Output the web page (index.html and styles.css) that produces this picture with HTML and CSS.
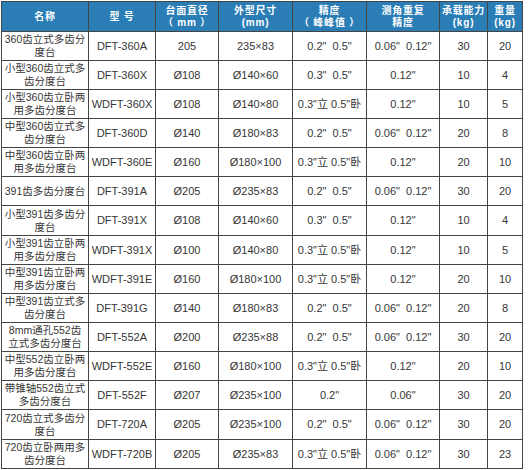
FILE: index.html
```html
<!DOCTYPE html>
<html lang="zh">
<head>
<meta charset="utf-8">
<title>多齿分度台</title>
<link rel="stylesheet" href="styles.css">
</head>
<body>
<table class="spec">
  <colgroup>
    <col class="c1"><col class="c2"><col class="c3"><col class="c4"><col class="c5"><col class="c6"><col class="c7"><col class="c8">
  </colgroup>
  <thead>
    <tr>
      <th>名称</th>
      <th>型 号</th>
      <th>台面直径<br>（ mm ）</th>
      <th>外型尺寸<br>(mm)</th>
      <th>精度<br>（ 峰峰值 ）</th>
      <th>测角重复<br>精度</th>
      <th>承载能力<br>(kg)</th>
      <th>重量<br>(kg)</th>
    </tr>
  </thead>
  <tbody>
    <tr><td class="name">360齿立式多齿分<br>度台</td><td>DFT-360A</td><td>205</td><td>235×83</td><td>0.2"&nbsp; 0.5"</td><td>0.06"&nbsp; 0.12"</td><td>30</td><td>20</td></tr>
    <tr><td class="name">小型360齿立式多<br>齿分度台</td><td>DFT-360X</td><td>Ø108</td><td>Ø140×60</td><td>0.3"&nbsp; 0.5"</td><td>0.12"</td><td>10</td><td>4</td></tr>
    <tr><td class="name">小型360齿立卧两<br>用多齿分度台</td><td>WDFT-360X</td><td>Ø108</td><td>Ø140×80</td><td>0.3"立 0.5"卧</td><td>0.12"</td><td>10</td><td>5</td></tr>
    <tr><td class="name">中型360齿立式多<br>齿分度台</td><td>DFT-360D</td><td>Ø140</td><td>Ø180×83</td><td>0.2"&nbsp; 0.5"</td><td>0.06"&nbsp; 0.12"</td><td>20</td><td>8</td></tr>
    <tr><td class="name">中型360齿立卧两<br>用多齿分度台</td><td>WDFT-360E</td><td>Ø160</td><td>Ø180×100</td><td>0.3"立 0.5"卧</td><td>0.12"</td><td>20</td><td>10</td></tr>
    <tr><td class="name">391齿多齿分度台</td><td>DFT-391A</td><td>Ø205</td><td>Ø235×83</td><td>0.2"&nbsp; 0.5"</td><td>0.06"&nbsp; 0.12"</td><td>30</td><td>20</td></tr>
    <tr><td class="name">小型391齿多齿分<br>度台</td><td>DFT-391X</td><td>Ø108</td><td>Ø140×60</td><td>0.3"&nbsp; 0.5"</td><td>0.12"</td><td>10</td><td>4</td></tr>
    <tr><td class="name">小型391齿立卧两<br>用多齿分度台</td><td>WDFT-391X</td><td>Ø100</td><td>Ø140×80</td><td>0.3"立 0.5"卧</td><td>0.12"</td><td>10</td><td>5</td></tr>
    <tr><td class="name">中型391齿立卧两<br>用多齿分度台</td><td>WDFT-391E</td><td>Ø160</td><td>Ø180×100</td><td>0.3"立 0.5"卧</td><td>0.12"</td><td>20</td><td>10</td></tr>
    <tr><td class="name">中型391齿立式多<br>齿分度台</td><td>DFT-391G</td><td>Ø140</td><td>Ø180×83</td><td>0.2"&nbsp; 0.5"</td><td>0.06"&nbsp; 0.12"</td><td>20</td><td>8</td></tr>
    <tr><td class="name">8mm通孔552齿<br>立式多齿分度台</td><td>DFT-552A</td><td>Ø200</td><td>Ø235×88</td><td>0.2"&nbsp; 0.5"</td><td>0.06"&nbsp; 0.12"</td><td>30</td><td>20</td></tr>
    <tr><td class="name">中型552齿立卧两<br>用多齿分度台</td><td>WDFT-552E</td><td>Ø160</td><td>Ø180×100</td><td>0.3"立 0.5"卧</td><td>0.12"</td><td>20</td><td>10</td></tr>
    <tr><td class="name">带锥轴552齿立式<br>多齿分度台</td><td>DFT-552F</td><td>Ø207</td><td>Ø235×100</td><td>0.2"</td><td>0.06"</td><td>30</td><td>20</td></tr>
    <tr><td class="name">720齿立式多齿分<br>度台</td><td>DFT-720A</td><td>Ø205</td><td>Ø235×100</td><td>0.2"&nbsp; 0.5"</td><td>0.06"&nbsp; 0.12"</td><td>30</td><td>20</td></tr>
    <tr><td class="name">720齿立卧两用多<br>齿分度台</td><td>WDFT-720B</td><td>Ø205</td><td>Ø235×83</td><td>0.3"立 0.5"卧</td><td>0.06"&nbsp; 0.12"</td><td>30</td><td>23</td></tr>
  </tbody>
</table>
</body>
</html>
```
FILE: styles.css
```css
html, body {
  margin: 0;
  padding: 0;
  background: #ffffff;
}
body {
  padding: 1px 0 0 1px;
  font-family: "Liberation Sans", Arial, "Noto Sans CJK SC", sans-serif;
  color: #363636;
}
.spec {
  border-collapse: collapse;
  table-layout: fixed;
  width: 521px;
}
.c1 { width: 87px; }
.c2 { width: 67px; }
.c3 { width: 63px; }
.c4 { width: 74px; }
.c5 { width: 74px; }
.c6 { width: 73px; }
.c7 { width: 48px; }
.c8 { width: 35px; }

.spec th,
.spec td {
  border: 1px solid #454545;
  text-align: center;
  vertical-align: middle;
  padding: 0;
  overflow: hidden;
  white-space: nowrap;
}
.spec thead tr { height: 30px; }
.spec tbody tr { height: 29px; }
.spec tbody tr:nth-child(7n) { height: 30px; }
.spec th {
  background: #2a7db5;
  color: #ffffff;
  font-weight: bold;
  font-size: 10px;
  line-height: 12px;
  letter-spacing: 0.8px;
}
.spec td {
  font-size: 11px;
  line-height: 13px;
}
.spec td.name {
  font-size: 10.5px;
  line-height: 13px;
  padding: 0;
}
```
